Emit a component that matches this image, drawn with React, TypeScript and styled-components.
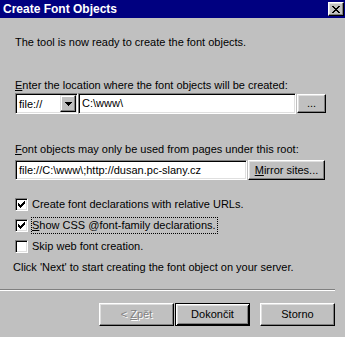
import React from "react";
import styled, { createGlobalStyle } from "styled-components";

const Global = createGlobalStyle`
  html, body { margin: 0; padding: 0; background: #c0c0c0; }
  * { box-sizing: border-box; }
`;

const Window = styled.div`
  width: 345px;
  height: 337px;
  background: #c0c0c0;
  font-family: "Liberation Sans", Arial, sans-serif;
  font-size: 11px;
  line-height: 13px;
  color: #000;
  display: flex;
  flex-direction: column;
  overflow: hidden;
`;

const TitleBar = styled.div`
  height: 18px;
  flex: none;
  background: #000080;
  display: flex;
  align-items: center;
  justify-content: space-between;
  padding: 0 1px 0 3px;
`;

const Title = styled.span`
  color: #fff;
  font-weight: bold;
  font-size: 12px;
`;

const CloseButton = styled.div`
  width: 16px;
  height: 14px;
  background: #c0c0c0;
  border: 1px solid;
  border-color: #fff #000 #000 #fff;
  box-shadow: inset -1px -1px #808080, inset 1px 1px #dfdfdf;
  display: flex;
  align-items: center;
  justify-content: center;
`;

const Body = styled.div`
  display: flex;
  flex-direction: column;
  padding: 0 10px 0 15px;
`;

const Text = styled.div<{ $top: number; $shift?: number }>`
  margin-top: ${(p) => p.$top}px;
  margin-left: ${(p) => p.$shift ?? 0}px;
  height: 13px;
  white-space: nowrap;
`;

const Key = styled.span`
  text-decoration: underline;
  text-underline-offset: 1px;
`;

const Row = styled.div<{ $top: number; $h: number }>`
  margin-top: ${(p) => p.$top}px;
  height: ${(p) => p.$h}px;
  display: flex;
  align-items: center;
`;

const sunken = `
  border: 1px solid;
  border-color: #808080 #fff #fff #808080;
  box-shadow: inset 1px 1px #000, inset -1px -1px #dfdfdf;
`;

const Combo = styled.div`
  ${sunken}
  width: 63px;
  height: 21px;
  background: #fff;
  display: flex;
  align-items: stretch;
  padding: 1px;
`;

const ComboValue = styled.div`
  flex: 1;
  padding: 3px 0 0 2px;
  white-space: nowrap;
`;

const ComboArrow = styled.div`
  width: 16px;
  background: #c0c0c0;
  border: 1px solid;
  border-color: #dfdfdf #000 #000 #dfdfdf;
  box-shadow: inset -1px -1px #808080, inset 1px 1px #fff;
  display: flex;
  align-items: center;
  justify-content: center;
`;

const Field = styled.div<{ $w: number }>`
  ${sunken}
  width: ${(p) => p.$w}px;
  height: 100%;
  background: #fff;
  padding: 3px 0 0 3px;
  white-space: nowrap;
  overflow: hidden;
`;

const Button = styled.div<{ $w: number; $h: number; $ml?: number }>`
  width: ${(p) => p.$w}px;
  height: ${(p) => p.$h}px;
  margin-left: ${(p) => p.$ml ?? 0}px;
  background: #c0c0c0;
  border: 1px solid;
  border-color: #fff #000 #000 #fff;
  box-shadow: inset -1px -1px #808080, inset 1px 1px #dfdfdf;
  display: flex;
  align-items: center;
  justify-content: center;
  white-space: nowrap;
`;

const DefaultButton = styled(Button)`
  border-color: #000;
  box-shadow: inset 1px 1px #fff, inset -1px -1px #000, inset 2px 2px #dfdfdf,
    inset -2px -2px #808080;
`;

const DisabledButton = styled(Button)`
  color: #808080;
  text-shadow: 1px 1px #fff;
`;

const CheckRow = styled.div<{ $top?: number }>`
  margin-top: ${(p) => p.$top ?? 0}px;
  height: 21px;
  display: flex;
  align-items: center;
  gap: 3px;
`;

const Box = styled.div`
  ${sunken}
  width: 13px;
  height: 13px;
  background: #fff;
  display: flex;
  align-items: center;
  justify-content: center;
  flex: none;
`;

const CheckLabel = styled.span<{ $focus?: boolean }>`
  border: 1px ${(p) => (p.$focus ? "dotted #000" : "solid transparent")};
  padding: 1px 1px 1px 0;
  white-space: nowrap;
`;

const Separator = styled.div`
  margin-top: 15px;
  margin-right: 10px;
  height: 2px;
  border-top: 1px solid #808080;
  border-bottom: 1px solid #fff;
`;

const Footer = styled.div`
  margin-top: 12px;
  display: flex;
  justify-content: flex-end;
  padding-right: 10px;
`;

const Pixels: React.FC<{ map: string[] }> = ({ map }) => {
  const w = map[0].length;
  const h = map.length;
  return (
    <svg width={w} height={h} viewBox={`0 0 ${w} ${h}`} shapeRendering="crispEdges">
      {map.flatMap((row, y) =>
        row.split("").map((c, x) =>
          c === "X" ? <rect key={`${x}-${y}`} x={x} y={y} width={1} height={1} fill="#000" /> : null
        )
      )}
    </svg>
  );
};

const CLOSE = [
  "XX....XX",
  ".XX..XX.",
  "..XXXX..",
  "...XX...",
  "..XXXX..",
  ".XX..XX.",
  "XX....XX",
];

const CHECK = [
  "......X",
  ".....XX",
  "X...XXX",
  "XX.XXX.",
  "XXXXX..",
  ".XXX...",
  "..X....",
];

const ARROW = ["XXXXXXX", ".XXXXX.", "..XXX..", "...X..."];

const Check: React.FC<{ on?: boolean }> = ({ on }) => (
  <Box>{on ? <Pixels map={CHECK} /> : null}</Box>
);

export default function App() {
  return (
    <>
      <Global />
      <Window>
        <TitleBar>
          <Title>Create Font Objects</Title>
          <CloseButton>
            <Pixels map={CLOSE} />
          </CloseButton>
        </TitleBar>
        <Body>
          <Text $top={18}>The tool is now ready to create the font objects.</Text>
          <Text $top={30}>
            <Key>E</Key>nter the location where the font objects will be created:
          </Text>
          <Row $top={1} $h={21}>
            <Combo>
              <ComboValue>file://</ComboValue>
              <ComboArrow>
                <Pixels map={ARROW} />
              </ComboArrow>
            </Combo>
            <Field $w={218}>C:\www\</Field>
            <Button $w={29} $h={19} $ml={1}>
              ...
            </Button>
          </Row>
          <Text $top={29}>
            <Key>F</Key>ont objects may only be used from pages under this root:
          </Text>
          <Row $top={4} $h={20}>
            <Field $w={232}>file://C:\www\;http://dusan.pc-slany.cz</Field>
            <Button $w={77} $h={20} $ml={1}>
              <span>
                <Key>M</Key>irror sites...
              </span>
            </Button>
          </Row>
          <CheckRow $top={14}>
            <Check on />
            <CheckLabel>Create font declarations with relative URLs.</CheckLabel>
          </CheckRow>
          <CheckRow>
            <Check on />
            <CheckLabel $focus>
              <Key>S</Key>how CSS @font-family declarations.
            </CheckLabel>
          </CheckRow>
          <CheckRow>
            <Check />
            <CheckLabel>Skip web font creation.</CheckLabel>
          </CheckRow>
          <Text $top={4} $shift={-2}>
            Click 'Next' to start creating the font object on your server.
          </Text>
        </Body>
        <Separator />
        <Footer>
          <DisabledButton $w={75} $h={23}>
            <span>
              &lt; <Key>Z</Key>pět
            </span>
          </DisabledButton>
          <DefaultButton $w={75} $h={23} $ml={1}>
            Dokončit
          </DefaultButton>
          <Button $w={75} $h={23} $ml={10}>
            Storno
          </Button>
        </Footer>
      </Window>
    </>
  );
}
